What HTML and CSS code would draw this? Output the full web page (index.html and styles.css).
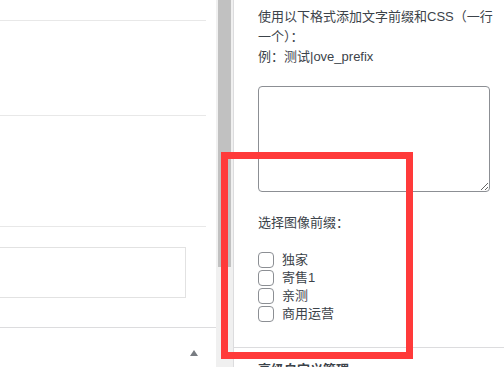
FILE: index.html
```html
<!DOCTYPE html>
<html>
<head>
    <meta charset="utf-8">
    <title>文字前缀设置</title>
    <link rel="stylesheet" href="styles.css">
</head>
<body>
    <div class="page">
        <div class="main">
            <div class="section sec-top"></div>
            <div class="section sec-mid"></div>
            <div class="section sec-low"></div>
            <div class="box-wrap">
                <div class="box"></div>
            </div>
            <div class="foot">
                <span class="toggle"></span>
            </div>
        </div>

        <div class="scroll">
            <div class="thumb"></div>
        </div>

        <div class="side">
            <div class="panel">
                <p class="hint">使用以下格式添加文字前缀和CSS（一行一个）：<br>例：测试|ove_prefix</p>
                <textarea class="prefix-text"></textarea>

                <p class="label">选择图像前缀：</p>
                <ul class="choices">
                    <li><label><input type="checkbox"> 独家</label></li>
                    <li><label><input type="checkbox"> 寄售1</label></li>
                    <li><label><input type="checkbox"> 亲测</label></li>
                    <li><label><input type="checkbox"> 商用运营</label></li>
                </ul>
            </div>
            <div class="panel next">
                <h3>高级自定义管理</h3>
            </div>
        </div>
    </div>

    <!-- annotation frame -->
    <div class="mark"></div>
</body>
</html>
```

FILE: styles.css
```css
body {
    margin: 0;
    font-family: "Liberation Sans", "Noto Sans CJK SC", sans-serif;
    font-size: 13px;
    color: #3c434a;
    background-color: #fff;
    overflow: hidden;
}

.page {
    display: flex;
    height: 367px;
    overflow: hidden;
}

.main {
    width: 216px;
    flex-shrink: 0;
}

.section {
    margin-right: 10px;
    border-bottom: 1px solid #e8e8e8;
}

.sec-top {
    height: 20px;
}

.sec-mid {
    height: 94px;
}

.sec-low {
    height: 110px;
}

.box-wrap {
    padding: 20px 0 29px;
    border-bottom: 1px solid #dcdcde;
}

.box {
    width: 185px;
    height: 49px;
    border: 1px solid #e2e2e2;
    border-left: none;
}

.foot {
    display: flex;
    justify-content: flex-end;
    padding: 22px 18px 0 0;
}

.toggle {
    width: 0;
    height: 0;
    border-left: 4px solid transparent;
    border-right: 4px solid transparent;
    border-bottom: 6px solid #787c82;
}

.scroll {
    width: 17px;
    flex-shrink: 0;
    background-color: #f0f0f0;
}

.thumb {
    width: 13px;
    height: 267px;
    margin-left: 2px;
    background-color: #c1c1c1;
}

.side {
    flex: 1;
    border-left: 1px solid #dcdcde;
}

.panel {
    padding: 7px 14px 24px 24px;
    border-bottom: 1px solid #dcdcde;
}

.hint {
    width: 242px;
    margin: 0;
    line-height: 20px;
}

.prefix-text {
    display: block;
    box-sizing: border-box;
    width: 232px;
    height: 106px;
    margin-top: 19px;
    border: 1px solid #8c8f94;
    border-radius: 4px;
}

.label {
    margin: 21px 0 0;
    line-height: 20px;
}

.choices {
    list-style: none;
    margin: 18px 0 0;
    padding: 0;
}

.choices li {
    height: 18px;
    line-height: 18px;
}

.choices label {
    display: flex;
    align-items: center;
    gap: 4px;
}

.choices input {
    appearance: none;
    width: 16px;
    height: 16px;
    margin: 0 4px 0 0;
    border: 1px solid #8c8f94;
    border-radius: 4px;
    background-color: #fff;
}

.next {
    border-bottom: none;
    padding-top: 12px;
}

.next h3 {
    margin: 0;
    font-size: 13px;
    font-weight: bold;
    line-height: 20px;
}

.mark {
    position: absolute;
    left: 221px;
    top: 152px;
    width: 192px;
    height: 207px;
    box-sizing: border-box;
    border: 7px solid #ff3a3a;
}
```
